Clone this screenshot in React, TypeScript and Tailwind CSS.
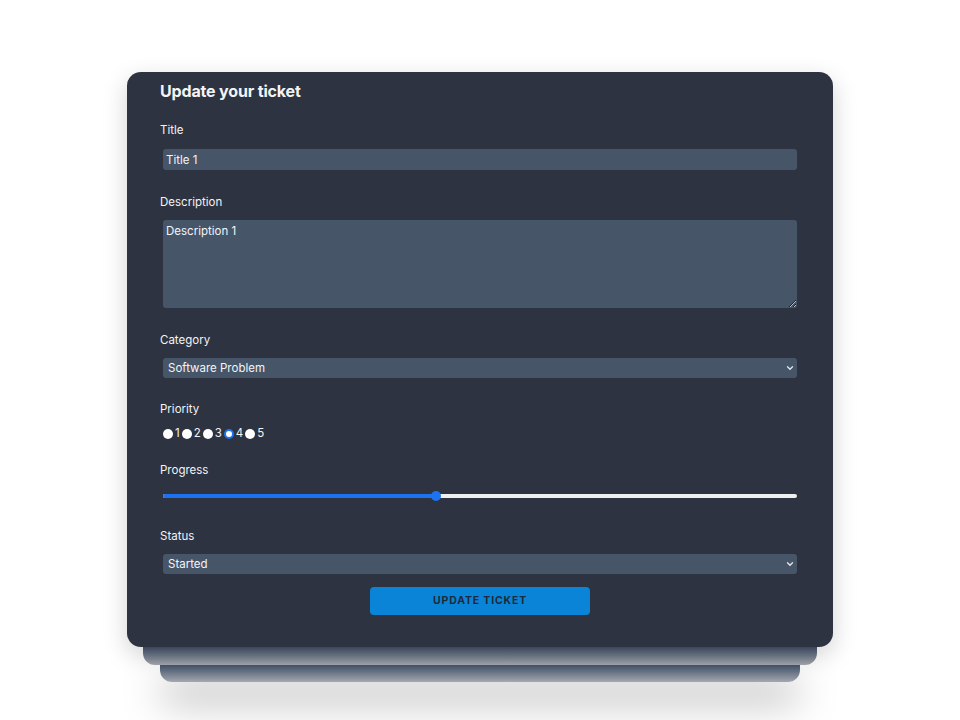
import React from "react";

const font = { fontFamily: "Inter, 'Noto Sans', sans-serif" };

const Chevron: React.FC = () => (
  <svg
    className="pointer-events-none absolute right-[3px] top-1/2 -translate-y-1/2"
    width="8"
    height="8"
    viewBox="0 0 8 8"
    fill="none"
  >
    <path d="M1.5 2.8 L4 5.3 L6.5 2.8" stroke="#e5e7eb" strokeWidth="1.3" strokeLinecap="round" />
  </svg>
);

const Label: React.FC<{ text: string; className?: string }> = ({ text, className }) => (
  <label className={`block pt-px text-[11.5px] leading-4 text-gray-100 ${className ?? ""}`}>{text}</label>
);

const Select: React.FC<{ value: string; options: string[]; className?: string }> = ({ value, options, className }) => (
  <div className={`relative mx-[3px] ${className ?? ""}`}>
    <select
      defaultValue={value}
      className="block h-[20px] w-full appearance-none rounded-[3px] bg-[#475569] pl-[5px] pt-px text-[11.5px] text-gray-100 outline-none"
      style={font}
    >
      {options.map((o) => (
        <option key={o}>{o}</option>
      ))}
    </select>
    <Chevron />
  </div>
);

const Priority: React.FC = () => {
  const values = [1, 2, 3, 4, 5];
  return (
    <div className="ml-[3px] flex h-4 items-center pt-px text-[11.5px] text-gray-100">
      {values.map((v) => (
        <label key={v} className="mr-[2px] flex items-center">
          <input
            type="radio"
            name="priority"
            defaultChecked={v === 4}
            className="mr-[2px] h-[10px] w-[10px] appearance-none rounded-full bg-white checked:border-[2px] checked:border-[#1d72f2]"
          />
          {v}
        </label>
      ))}
    </div>
  );
};

const Progress: React.FC<{ value: number }> = ({ value }) => (
  <div className="relative mx-[3px] flex h-4 items-center">
    <div className="h-[4px] w-full rounded-full bg-[#efefef]">
      <div className="h-full rounded-full bg-[#1d72f2]" style={{ width: `${value}%` }} />
    </div>
    <div
      className="absolute top-1/2 h-[10px] w-[10px] -translate-x-1/2 -translate-y-1/2 rounded-full bg-[#1d72f2]"
      style={{ left: `${value}%` }}
    />
  </div>
);

const App: React.FC = () => {
  return (
    <div className="min-h-[720px] bg-white pt-[72px]" style={font}>
      <div className="mx-auto w-[706px]">
        <form className="relative z-20 rounded-[14px] bg-[#2d3341] px-[33px] pb-[32px] pt-[7px] shadow-[0_8px_24px_rgba(0,0,0,0.18)]">
          <h3 className="text-base font-bold leading-6 tracking-[-0.01em] text-gray-100">Update your ticket</h3>

          <Label text="Title" className="mt-[18px]" />
          <input
            defaultValue="Title 1"
            className="mx-[3px] mt-[11px] block h-[21px] w-[calc(100%-6px)] rounded-[3px] bg-[#475569] px-[3px] pt-px text-[11.5px] text-gray-100 outline-none"
            style={font}
          />

          <Label text="Description" className="mt-[23px]" />
          <textarea
            defaultValue="Description 1"
            className="mx-[3px] mt-[10px] block h-[88px] w-[calc(100%-6px)] resize-y rounded-[3px] bg-[#475569] px-[3px] py-[3px] text-[11.5px] leading-4 text-gray-100 outline-none"
            style={font}
          />

          <Label text="Category" className="mt-[23px]" />
          <Select
            value="Software Problem"
            options={["Hardware Problem", "Software Problem", "Project"]}
            className="mt-[10px]"
          />

          <Label text="Priority" className="mt-[22px]" />
          <div className="mt-[8px]">
            <Priority />
          </div>

          <Label text="Progress" className="mt-[20px]" />
          <div className="mt-[10px]">
            <Progress value={43} />
          </div>

          <Label text="Status" className="mt-[23px]" />
          <Select value="Started" options={["Not Started", "Started", "Done"]} className="mt-[10px]" />

          <div className="mt-[13px] flex justify-center">
            <button
              type="button"
              className="h-[28px] w-[220px] rounded-[4px] bg-[#0a84d6] text-[10.5px] font-bold tracking-[0.08em] text-[#1e2a3b]"
            >
              UPDATE TICKET
            </button>
          </div>
        </form>

        <div className="relative z-10 mx-[16px] h-[18px] rounded-b-[12px] bg-gradient-to-b from-[#44536a] to-[#a4a8af]" />
        <div className="mx-[33px] h-[17px] rounded-b-[12px] bg-gradient-to-b from-[#44536a] to-[#a4a8af] shadow-[0_18px_40px_rgba(0,0,0,0.38)]" />
      </div>
    </div>
  );
};

export default App;
